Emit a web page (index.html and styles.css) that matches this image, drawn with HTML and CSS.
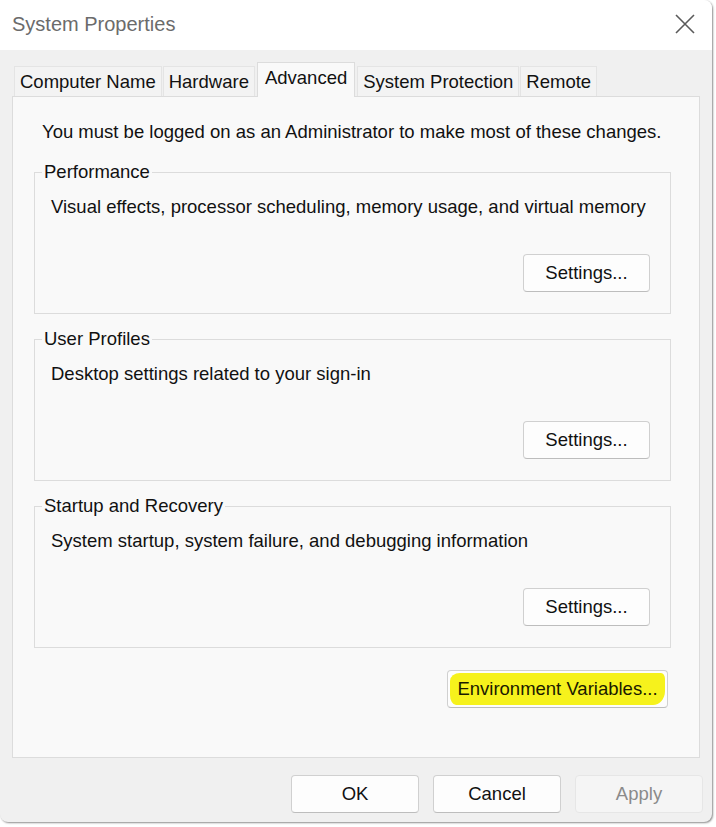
FILE: index.html
```html
<!DOCTYPE html>
<html>
<head>
<meta charset="utf-8">
<link rel="stylesheet" href="styles.css">
</head>
<body>
<div class="window">
  <div class="titlebar">
    <span class="title">System Properties</span>
    <svg class="close" width="20" height="20" viewBox="0 0 20 20"><path d="M1 1 L19 19 M19 1 L1 19" stroke="#5a5a5a" stroke-width="1.6" fill="none"/></svg>
  </div>
  <div class="content">
    <div class="tabs">
      <div class="tab">Computer Name</div>
      <div class="tab">Hardware</div>
      <div class="tab active">Advanced</div>
      <div class="tab">System Protection</div>
      <div class="tab">Remote</div>
    </div>
    <div class="panel">
      <p class="intro">You must be logged on as an Administrator to make most of these changes.</p>
      <fieldset class="group">
        <legend>Performance</legend>
        <p class="desc">Visual effects, processor scheduling, memory usage, and virtual memory</p>
        <div class="row"><button class="btn settings">Settings...</button></div>
      </fieldset>
      <fieldset class="group">
        <legend>User Profiles</legend>
        <p class="desc">Desktop settings related to your sign-in</p>
        <div class="row"><button class="btn settings">Settings...</button></div>
      </fieldset>
      <fieldset class="group">
        <legend>Startup and Recovery</legend>
        <p class="desc">System startup, system failure, and debugging information</p>
        <div class="row"><button class="btn settings">Settings...</button></div>
      </fieldset>
      <div class="envrow"><button class="btn env"><span class="hl">Environment Variables...</span></button></div>
    </div>
    <div class="footer">
      <button class="btn dlg">OK</button>
      <button class="btn dlg">Cancel</button>
      <button class="btn dlg disabled">Apply</button>
    </div>
  </div>
</div>
</body>
</html>
```
FILE: styles.css
```css
html, body {
  margin: 0;
  padding: 0;
  background: #ffffff;
  width: 716px;
  height: 827px;
  overflow: hidden;
  font-family: "Liberation Sans", Arial, sans-serif;
}
.window {
  width: 712px;
  height: 822px;
  background: #f0f0f0;
  border-radius: 0 8px 8px 8px;
  box-shadow: 1px 1px 2px rgba(0,0,0,0.45);
  overflow: hidden;
  display: flex;
  flex-direction: column;
}
.titlebar {
  height: 50px;
  background: #ffffff;
  display: flex;
  align-items: center;
  justify-content: space-between;
  padding: 0 17px 0 12px;
  flex-shrink: 0;
}
.title {
  font-size: 20px;
  color: #6b6b6b;
  margin-top: -2px;
}
.close {
  margin-top: -2px;
}
.content {
  padding: 12px 9px 0 12px;
  display: flex;
  flex-direction: column;
}
.tabs {
  display: flex;
  gap: 1px;
  padding-left: 2px;
  align-items: flex-end;
  height: 34px;
  position: relative;
  z-index: 1;
}
.tab {
  height: 30px;
  box-sizing: border-box;
  padding: 0 5px;
  font-size: 18.5px;
  color: #111;
  background: #f3f3f3;
  border: 1px solid #e4e4e4;
  border-bottom: none;
  display: flex;
  align-items: center;
}
.tab.active {
  height: 35px;
  padding: 0 7px 4px 7px;
  margin: 0 1px -1px 1px;
  background: #f9f9f9;
  border-color: #dcdcdc;
}
.panel {
  width: 688px;
  height: 662px;
  box-sizing: border-box;
  background: #f9f9f9;
  border: 1px solid #dcdcdc;
  padding: 24px 28px 0 21px;
  display: flex;
  flex-direction: column;
}
.intro {
  margin: 0 0 0 8px;
  font-size: 18.5px;
  color: #111;
  line-height: 22px;
}
.group {
  margin: 19px 0 0 0;
  padding: 0 20px 0 16px;
  border: 1px solid #dcdcdc;
  height: 152px;
  box-sizing: border-box;
  display: flex;
  flex-direction: column;
}
.group + .group {
  margin-top: 15px;
}
.group legend {
  font-size: 18.5px;
  color: #111;
  padding: 0 2px;
  margin-left: -9px;
  line-height: 20px;
}
.desc {
  margin: 14px 0 0 0;
  font-size: 18.5px;
  color: #111;
  line-height: 22px;
}
.row {
  display: flex;
  justify-content: flex-end;
  margin-top: 36px;
}
.btn {
  font-family: "Liberation Sans", Arial, sans-serif;
  font-size: 18.5px;
  color: #111;
  background: #fdfdfd;
  border: 1px solid #d0d0d0;
  border-bottom-color: #bdbdbd;
  border-radius: 4px;
  padding: 0;
  box-sizing: border-box;
}
.settings {
  width: 127px;
  height: 38px;
}
.envrow {
  display: flex;
  justify-content: flex-end;
  margin-top: 22px;
  margin-right: 3px;
}
.env {
  width: 221px;
  height: 38px;
  display: flex;
  align-items: center;
  justify-content: center;
  padding: 2px;
}
.hl {
  display: flex;
  width: 100%;
  height: 100%;
  box-sizing: border-box;
  background: #f6f21c;
  border-radius: 10px 4px 12px 6px / 8px 6px 14px 10px;
  align-items: center;
  justify-content: center;
  color: #1a1a00;
}
.footer {
  display: flex;
  justify-content: flex-end;
  gap: 14px;
  margin-top: 17px;
}
.dlg {
  width: 128px;
  height: 38px;
}
.dlg.disabled {
  background: #f5f5f5;
  border-color: #e6e6e6;
  color: #8a8a8a;
}
```
